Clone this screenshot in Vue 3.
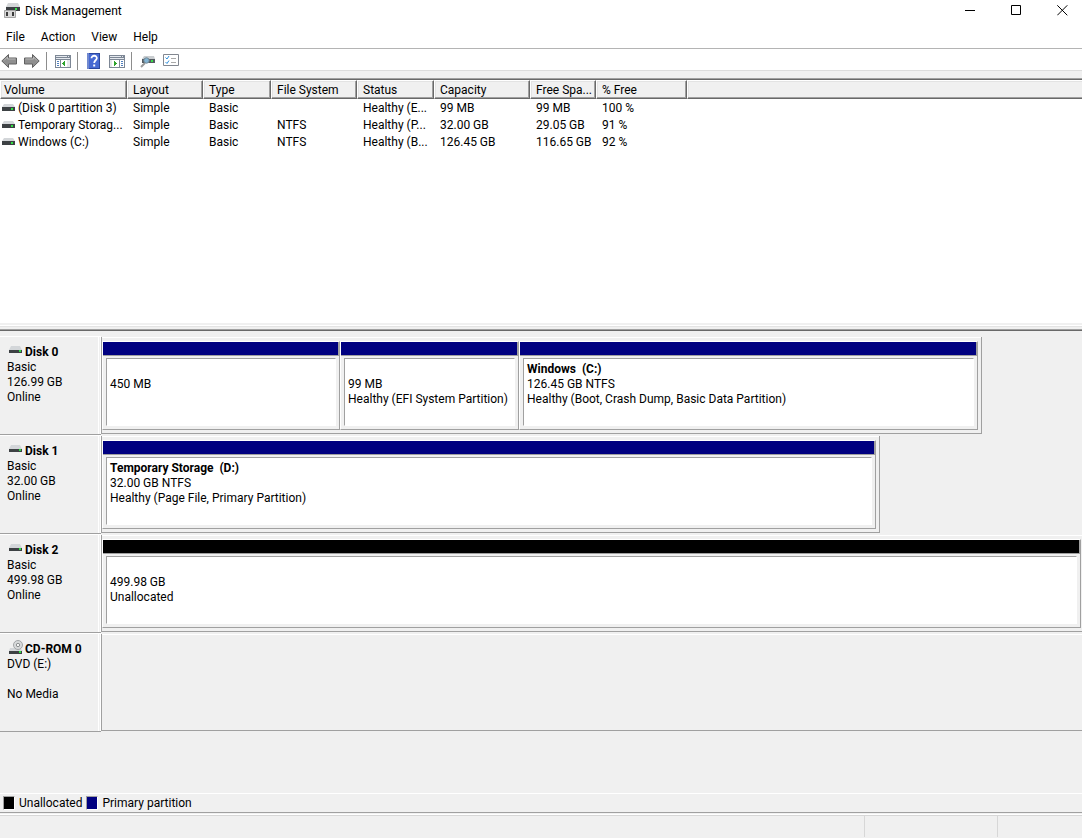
<script setup>
const menus = ['File', 'Action', 'View', 'Help']

const columns = [
  { title: 'Volume', cls: 'c-volume' },
  { title: 'Layout', cls: 'c-layout' },
  { title: 'Type', cls: 'c-type' },
  { title: 'File System', cls: 'c-fs' },
  { title: 'Status', cls: 'c-status' },
  { title: 'Capacity', cls: 'c-capacity' },
  { title: 'Free Spa...', cls: 'c-free' },
  { title: '% Free', cls: 'c-percent' },
]

const volumes = [
  ['(Disk 0 partition 3)', 'Simple', 'Basic', '', 'Healthy (E...', '99 MB', '99 MB', '100 %'],
  ['Temporary Storag...', 'Simple', 'Basic', 'NTFS', 'Healthy (P...', '32.00 GB', '29.05 GB', '91 %'],
  ['Windows (C:)', 'Simple', 'Basic', 'NTFS', 'Healthy (B...', '126.45 GB', '116.65 GB', '92 %'],
]

const disks = [
  {
    name: 'Disk 0',
    info: ['Basic', '126.99 GB', 'Online'],
    width: 89.8,
    parts: [
      { share: 236, kind: 'primary', title: '', lines: ['450 MB'] },
      { share: 177, kind: 'primary', title: '', lines: ['99 MB', 'Healthy (EFI System Partition)'] },
      { share: 457, kind: 'primary', title: 'Windows  (C:)', lines: ['126.45 GB NTFS', 'Healthy (Boot, Crash Dump, Basic Data Partition)'] },
    ],
  },
  {
    name: 'Disk 1',
    info: ['Basic', '32.00 GB', 'Online'],
    width: 79.4,
    parts: [
      { share: 1, kind: 'primary', title: 'Temporary Storage  (D:)', lines: ['32.00 GB NTFS', 'Healthy (Page File, Primary Partition)'] },
    ],
  },
  {
    name: 'Disk 2',
    info: ['Basic', '499.98 GB', 'Online'],
    width: 100,
    parts: [{ share: 1, kind: 'unallocated', title: '', lines: ['499.98 GB', 'Unallocated'] }],
  },
  { name: 'CD-ROM 0', cd: true, info: ['DVD (E:)', '', 'No Media'], width: 100, parts: [] },
]
</script>

<template>
  <div class="window">
    <header class="titlebar">
      <svg class="app-icon" width="16" height="16" viewBox="0 0 16 16" aria-hidden="true">
        <path d="M4 0h10l2 4H2z" fill="#d4d6d8" />
        <path d="M2 4h14v4H2z" fill="#3c4043" />
        <path d="M11 5h2v2h-2z" fill="#35e04c" />
        <path d="M1 7h10v8H0V8z" fill="#d9d9d9" />
        <path d="M.5 7.500h11v7H.5z" fill="none" stroke="#a5a5a5" />
        <path d="M2 9h2v4H2zM8 9h2v4H8z" fill="#3b3b3b" />
      </svg>
      <h1>Disk Management</h1>
      <div class="caption-buttons">
        <button type="button" aria-label="Minimize">
          <svg width="11" height="11" viewBox="0 0 11 11"><path d="M0 5.500h10" stroke="#000" /></svg>
        </button>
        <button type="button" aria-label="Maximize">
          <svg width="11" height="11" viewBox="0 0 11 11"><path d="M.5.5h9v9h-9z" fill="none" stroke="#000" /></svg>
        </button>
        <button type="button" aria-label="Close">
          <svg width="11" height="11" viewBox="0 0 11 11"><path d="M.3.3l10 10M10.300.3l-10 10" stroke="#000" /></svg>
        </button>
      </div>
    </header>

    <nav class="menubar">
      <button v-for="m in menus" :key="m" type="button">{{ m }}</button>
    </nav>

    <div class="toolbar">
      <div class="group">
        <button type="button" aria-label="Back">
          <svg width="16" height="16" viewBox="0 0 16 16">
            <path d="M.8 8L7.500 1.500v3.500h8v6h-8v3.500z" fill="#8f8f8f" stroke="#606060" />
            <path d="M3 7.500L6.500 4v2h8" fill="none" stroke="#b9b9b9" />
          </svg>
        </button>
        <button type="button" aria-label="Forward">
          <svg width="16" height="16" viewBox="0 0 16 16">
            <path d="M15.200 8L8.500 1.500v3.500h-8v6h8v3.500z" fill="#8f8f8f" stroke="#606060" />
            <path d="M13 7.500L9.500 4v2h-8" fill="none" stroke="#b9b9b9" />
          </svg>
        </button>
      </div>
      <div class="group">
        <button type="button" aria-label="Show or hide console tree">
          <svg width="16" height="16" viewBox="0 0 16 16" shape-rendering="crispEdges">
            <path d="M0 2h16v13H0z" fill="#7d8795" />
            <path d="M1 3h11v1H1zM13 3h1v1h-1zM1 5h14v1H1z" fill="#e4e8ee" />
            <path d="M1 7h4v7H1zM6 7h9v7H6z" fill="#fff" />
            <path d="M2 8h2v1H2zM2 10h2v1H2zM2 12h2v1H2z" fill="#4f7fbd" />
            <path d="M12 7h3v7h-3z" fill="#e6e8eb" />
            <path d="M7 10h1v1H7zM8 9h1v3H8zM9 8h1v5H9z" fill="#2ea32c" />
          </svg>
        </button>
      </div>
      <div class="group">
        <button type="button" aria-label="Help">
          <svg width="16" height="16" viewBox="0 0 16 16">
            <path d="M1 0h13v16H1z" fill="#2b479f" />
            <path d="M3 1h10v14H3z" fill="#4669d2" />
            <path d="M1 0h2v16H1z" fill="#7189cf" />
            <path d="M5.500 5.300C5.500 1.800 11 2 10.800 5.200 10.700 7.300 8.200 7.300 8.200 10" fill="none" stroke="#fff" stroke-width="1.800" />
            <path d="M7.200 11.500h2v2h-2z" fill="#fff" />
          </svg>
        </button>
        <button type="button" aria-label="Show or hide action pane">
          <svg width="16" height="16" viewBox="0 0 16 16" shape-rendering="crispEdges">
            <path d="M0 2h16v13H0z" fill="#7d8795" />
            <path d="M1 3h11v1H1zM13 3h1v1h-1zM1 5h14v1H1z" fill="#e4e8ee" />
            <path d="M1 7h9v7H1zM11 7h4v7h-4z" fill="#fff" />
            <path d="M12 8h2v1h-2zM12 10h2v1h-2zM12 12h2v1h-2z" fill="#4f7fbd" />
            <path d="M1 7h2v7H1z" fill="#e6e8eb" />
            <path d="M5 8h1v5H5zM6 9h1v3H6zM7 10h1v1H7z" fill="#2ea32c" />
          </svg>
        </button>
      </div>
      <div class="group">
        <button type="button" aria-label="Rescan disks">
          <svg width="16" height="16" viewBox="0 0 16 16">
            <path d="M4 3h10l1 3H2z" fill="#c9cdd0" />
            <path d="M2 6h13v4H2z" fill="#545a60" />
            <path d="M11 7h2v2h-2z" fill="#38df4a" />
            <path d="M5 10L1 14" stroke="#9a9a9a" stroke-width="2" />
            <circle cx="6.500" cy="7.500" r="2.700" fill="#83b4d4" stroke="#718794" />
          </svg>
        </button>
        <button type="button" aria-label="Properties">
          <svg width="16" height="16" viewBox="0 0 16 16">
            <path d="M.5 1.500h15v11H.5z" fill="#fff" stroke="#828790" />
            <path d="M2.500 4.500l1.500 1.500 2-3M2.500 9l1.500 1.500 2-3" fill="none" stroke="#2f8fdc" />
            <path d="M8 5.500h5M8 9.500h5" stroke="#a9a9a9" />
          </svg>
        </button>
      </div>
    </div>

    <section class="volume-pane">
      <table>
        <colgroup>
          <col v-for="c in columns" :key="c.cls" :class="c.cls" />
          <col />
        </colgroup>
        <thead>
          <tr>
            <th v-for="c in columns" :key="c.title" scope="col">{{ c.title }}</th>
            <td class="filler"></td>
          </tr>
        </thead>
        <tbody>
          <tr v-for="v in volumes" :key="v[0]">
            <td v-for="(cell, i) in v" :key="i">
              <svg v-if="i === 0" width="13" height="7" viewBox="0 0 13 7" aria-hidden="true">
                <path d="M2 0h9l2 3H0z" fill="#d3d6d9" />
                <path d="M0 3h13v4H0z" fill="#3d4144" />
                <path d="M9 4h2v2H9z" fill="#31e043" />
              </svg>{{ cell }}
            </td>
            <td></td>
          </tr>
        </tbody>
      </table>
    </section>

    <div class="splitter"></div>

    <main class="disk-pane">
      <section v-for="d in disks" :key="d.name" class="disk">
        <div class="disk-label">
          <h2>
            <svg v-if="d.cd" width="16" height="16" viewBox="0 0 16 16" aria-hidden="true">
              <path d="M2 8h10l3 3H1z" fill="#d3d6d9" />
              <path d="M1 11h13v3H1z" fill="#3d4144" />
              <path d="M11 11h2v2h-2z" fill="#31e043" />
              <circle cx="10" cy="5" r="4.500" fill="#d8dadb" stroke="#a2a5a7" />
              <circle cx="10" cy="5" r="1.700" fill="#f4f4f4" stroke="#8d9091" />
            </svg>
            <svg v-else width="16" height="16" viewBox="0 0 16 16" aria-hidden="true">
              <path d="M3 3h9l2 4H1z" fill="#d3d6d9" />
              <path d="M1 7h13v3H1z" fill="#3d4144" />
              <path d="M11 7h2v2h-2z" fill="#31e043" />
            </svg>{{ d.name }}
          </h2>
          <p v-for="(line, i) in d.info" :key="i">{{ line }}</p>
        </div>
        <div class="disk-area">
          <div class="disk-graph" :class="{ full: d.width === 100 }" :style="{ width: d.width + '%' }">
            <article v-for="(p, i) in d.parts" :key="i" class="part" :style="{ flexGrow: p.share }">
              <div class="bar" :class="p.kind"></div>
              <div class="box">
                <h3>{{ p.title }}</h3>
                <p v-for="l in p.lines" :key="l">{{ l }}</p>
              </div>
            </article>
          </div>
        </div>
      </section>
    </main>

    <footer class="legend">
      <span class="key"><i class="unallocated"></i>Unallocated</span>
      <span class="key"><i class="primary"></i>Primary partition</span>
    </footer>
    <div class="statusbar">
      <span class="grow"></span>
      <span class="mid"></span>
      <span class="end"></span>
    </div>
  </div>
</template>

<style>
body {
  margin: 0;
}
</style>

<style scoped>
.window {
  display: flex;
  flex-direction: column;
  min-height: 100vh;
  overflow: hidden;
  background: #f0f0f0;
  color: #000;
  font: 12px/15px "Segoe UI", Roboto, "Noto Sans", sans-serif;
}
h1, h2, h3, p {
  margin: 0;
  font-size: 12px;
  line-height: 15px;
}
button {
  border: 0;
  padding: 0;
  background: none;
  font: inherit;
  color: inherit;
}
svg {
  display: block;
  flex: none;
}
.titlebar {
  display: flex;
  align-items: center;
  height: 21px;
  padding: 0 0 1px 4px;
  background: #fff;
}
h1 {
  padding: 2px 0 0 5px;
  font-weight: 400;
}
.caption-buttons {
  display: flex;
  margin-left: auto;
}
.caption-buttons button {
  display: flex;
  align-items: center;
  justify-content: flex-end;
  width: 46px;
  height: 21px;
  padding-right: 14px;
}
.menubar {
  display: flex;
  gap: 16px;
  align-items: center;
  height: 21px;
  padding: 5px 6px 0;
  background: #fff;
}
.toolbar {
  display: flex;
  align-items: center;
  height: 20px;
  border-top: 1px solid #b4b4b4;
  padding: 2px 0 0 1px;
  background: #fff;
}
.group {
  display: flex;
  align-items: center;
  gap: 7px;
  height: 18px;
  padding: 0 6px 0 8px;
  border-left: 1px solid #8d8d8d;
}
.group:first-child {
  border: 0;
  padding-left: 0;
}
.group:last-child {
  padding-right: 0;
}
.volume-pane {
  flex: 1 0 auto;
  min-height: 243px;
  margin-top: 7px;
  border-top: 1px solid #a0a0a0;
  box-shadow: 0 -7px 0 #f0f0f0, 0 -8px 0 #dcdcdc;
  background: #fff;
}
table {
  width: 100%;
  table-layout: fixed;
  border-collapse: separate;
  border-spacing: 0;
  border-top: 1px solid #696969;
}
.c-volume { width: 127px; }
.c-layout { width: 76px; }
.c-type { width: 68px; }
.c-fs { width: 86px; }
.c-status { width: 77px; }
.c-capacity { width: 96px; }
.c-free { width: 66px; }
.c-percent { width: 91px; }
th,
.filler {
  box-sizing: border-box;
  height: 19px;
  border-top: 1px solid #fff;
  border-left: 1px solid #fff;
  border-right: 1px solid #696969;
  border-bottom: 1px solid #696969;
  padding: 2px 0 0 5px;
  background: #f0f0f0;
  box-shadow: inset -1px -1px 0 #a0a0a0, inset 1px 1px 0 #e3e3e3;
  font-weight: 400;
  text-align: left;
  white-space: nowrap;
}
.filler {
  border-right: 0;
  box-shadow: inset 0 -1px 0 #a0a0a0, inset 1px 1px 0 #e3e3e3;
}
th:first-child {
  padding-left: 3px;
}
tbody td {
  height: 15px;
  padding: 2px 0 0 6px;
  line-height: 15px;
  white-space: nowrap;
}
tbody td:first-child {
  padding-left: 2px;
}
tbody svg {
  display: inline-block;
  margin-right: 3px;
  vertical-align: 1px;
}
.splitter {
  height: 4px;
  border-top: 2px solid #f0f0f0;
  border-bottom: 1px solid #a0a0a0;
  margin-bottom: 1px;
  box-shadow: inset 0 1px 0 #fff, inset 0 2px 0 #e3e3e3, 0 1px 0 #696969;
}
.disk-pane {
  padding-top: 5px;
}
.disk {
  display: flex;
  height: 99px;
}
.disk-label {
  box-sizing: border-box;
  flex: none;
  width: 101px;
  border-top: 1px solid #fff;
  border-bottom: 1px solid #a0a0a0;
  padding: 8px 0 0 7px;
  box-shadow: inset -1px 0 0 #fff, inset -2px 0 0 #f0f0f0, inset -3px 0 0 #fff;
}
.disk-label h2 {
  display: flex;
  gap: 1px;
  height: 15px;
  padding-left: 1px;
}
.disk-label svg {
  margin-top: -2px;
}
.disk-label p {
  min-height: 15px;
}
.disk-area {
  flex: 1;
  min-width: 0;
  margin: 1px 0;
  border-left: 1px solid #a0a0a0;
}
.disk-graph {
  box-sizing: border-box;
  display: flex;
  height: 97px;
  padding: 4px 3px 3px 0;
  border: solid #a0a0a0;
  border-width: 0 1px 1px 0;
  box-shadow: inset 0 1px 0 #fff;
}
.disk-graph.full {
  padding-right: 1px;
  border-right: 0;
}
.part {
  box-sizing: border-box;
  display: flex;
  flex-direction: column;
  flex-basis: 0;
  min-width: 0;
  border: solid;
  border-width: 1px;
  border-color: #fff #a0a0a0 #a0a0a0 #fff;
}
.bar {
  height: 13px;
  border-right: 1px solid #a0a0a0;
  border-bottom: 1px solid #a0a0a0;
}
.primary {
  background: #000080;
}
.unallocated {
  background: #000;
}
.box {
  flex: 1;
  margin: 2px 3px 3px;
  border: 1px solid;
  border-color: #a0a0a0 #fff #fff #a0a0a0;
  padding: 3px 3px 2px;
  background: #fff;
  overflow: hidden;
  white-space: pre;
}
.box h3 {
  min-height: 15px;
}
.legend {
  display: flex;
  gap: 4px;
  align-items: center;
  height: 18px;
  margin-top: 61px;
  border-top: 1px solid #fff;
  border-bottom: 1px solid #a0a0a0;
  padding-left: 3px;
}
.key {
  display: flex;
  align-items: center;
  gap: 4px;
}
.key i {
  width: 10px;
  height: 12px;
  border: 1px solid;
  border-color: #a0a0a0 #fff #fff #a0a0a0;
}
.statusbar {
  display: flex;
  height: 21px;
  margin-top: 1px;
  border-top: 1px solid #fff;
  padding: 1px 0 1px;
  box-shadow: inset 0 1px 0 #d7d7d7;
}
.grow {
  flex: 1;
}
.mid {
  width: 132px;
  border-left: 1px solid #d7d7d7;
}
.end {
  width: 84px;
  border-left: 1px solid #d7d7d7;
}
</style>
